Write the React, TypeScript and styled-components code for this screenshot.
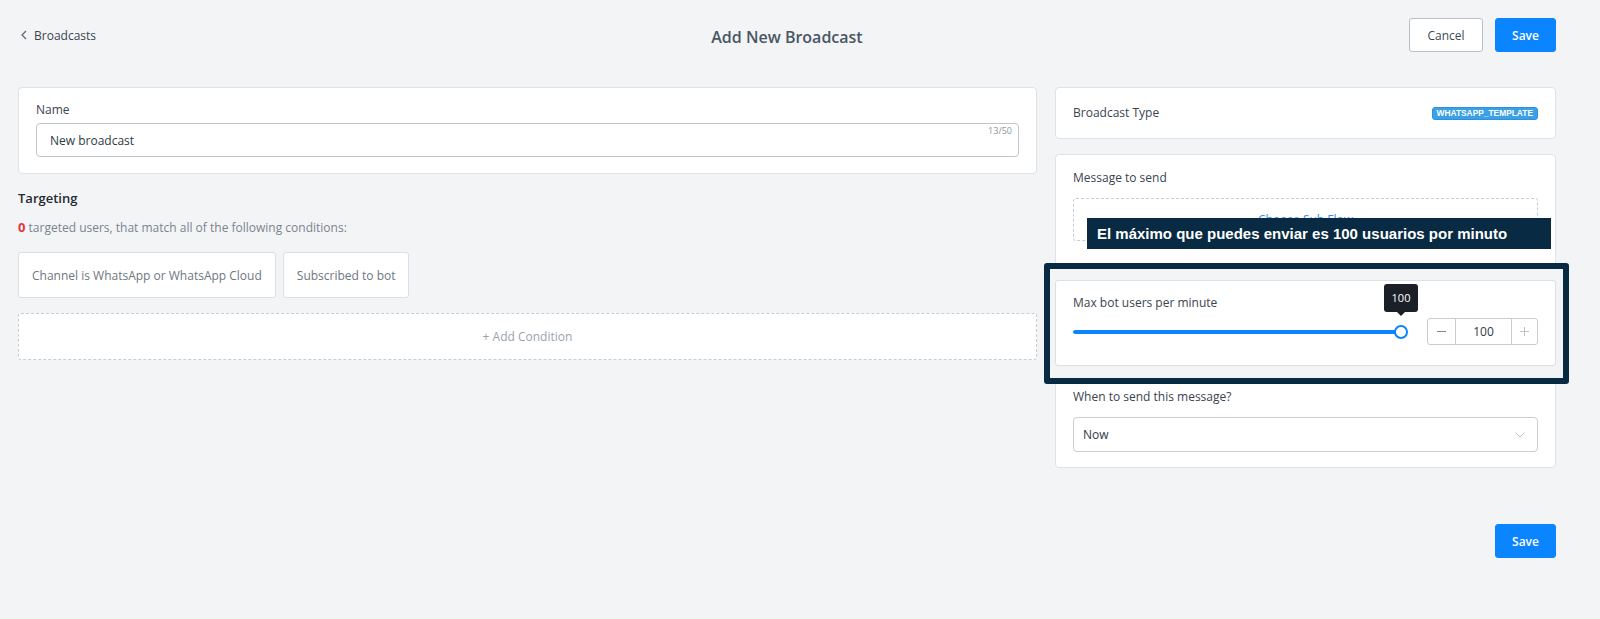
import React from "react";
import styled, { createGlobalStyle } from "styled-components";

const GlobalStyle = createGlobalStyle`
  html, body { margin: 0; padding: 0; background: #f3f4f6; }
  body {
    font-family: "Open Sans", "Noto Sans", Arial, sans-serif;
    color: #2f3a45;
    -webkit-font-smoothing: antialiased;
  }
  * { box-sizing: border-box; }
`;

const Page = styled.div`
  width: 1538px;
  margin-left: 18px;
  padding-top: 18px;
  min-height: 619px;
`;

const Header = styled.header`
  display: grid;
  grid-template-columns: 1fr auto 1fr;
  align-items: center;
  height: 34px;
`;

const BackLink = styled.a`
  display: flex;
  align-items: center;
  gap: 7px;
  padding-left: 3px;
  font-size: 12px;
  color: #3b4550;
  text-decoration: none;
  cursor: pointer;
`;

const Title = styled.h1`
  margin: 0;
  padding-top: 4px;
  font-size: 16px;
  font-weight: 600;
  color: #4a5663;
`;

const Actions = styled.div`
  justify-self: end;
  display: flex;
  gap: 12px;
`;

const Button = styled.button<{ $primary?: boolean; $w: number }>`
  height: 34px;
  width: ${(p) => p.$w}px;
  border-radius: 3px;
  font-family: inherit;
  font-size: 12px;
  font-weight: ${(p) => (p.$primary ? 600 : 400)};
  cursor: pointer;
  border: 1px solid ${(p) => (p.$primary ? "#0a84ff" : "#b9bfc6")};
  background: ${(p) => (p.$primary ? "#0a84ff" : "#ffffff")};
  color: ${(p) => (p.$primary ? "#ffffff" : "#3d4750")};
`;

const Main = styled.main`
  display: grid;
  grid-template-columns: 1019px 501px;
  gap: 18px;
  margin-top: 35px;
  align-items: start;
`;

const Column = styled.section`
  display: flex;
  flex-direction: column;
`;

const Card = styled.div`
  background: #ffffff;
  border: 1px solid #dfe2e6;
  border-radius: 4px;
`;

const NameCard = styled(Card)`
  padding: 13px 17px 16px;
`;

const Label = styled.div<{ $mb?: number; $mt?: number }>`
  font-size: 12px;
  line-height: 18px;
  color: #3a4450;
  margin-top: ${(p) => p.$mt ?? 0}px;
  margin-bottom: ${(p) => p.$mb ?? 0}px;
`;

const InputWrap = styled.div`
  position: relative;
`;

const TextInput = styled.input`
  display: block;
  width: 100%;
  height: 34px;
  border: 1px solid #c1c6cc;
  border-radius: 4px;
  padding: 0 13px;
  font-family: inherit;
  font-size: 12px;
  color: #2f3a45;
  background: #fff;
  outline: none;
`;

const Counter = styled.span`
  position: absolute;
  top: 2px;
  right: 7px;
  font-size: 9px;
  line-height: 12px;
  color: #8c949c;
`;

const SectionTitle = styled.h2`
  margin: 14px 0 0;
  font-size: 13px;
  line-height: 20px;
  font-weight: 600;
  color: #1f2a33;
`;

const Subtitle = styled.p`
  margin: 10px 0 0;
  font-size: 12px;
  line-height: 18px;
  color: #7a848e;
`;

const Count = styled.span`
  color: #e5343a;
  font-weight: 700;
  font-size: 13px;
`;

const Chips = styled.div`
  display: flex;
  gap: 7px;
  margin-top: 15px;
`;

const Chip = styled.div`
  height: 46px;
  display: flex;
  align-items: center;
  padding: 0 13px;
  background: #fff;
  border: 1px solid #dcdfe3;
  border-radius: 3px;
  font-size: 12px;
  color: #6d7781;
`;

const AddCondition = styled.button`
  margin-top: 15px;
  height: 47px;
  width: 100%;
  background: #fff;
  border: 1px dashed #c9cdd3;
  border-radius: 3px;
  font-family: inherit;
  font-size: 12px;
  color: #9aa3ac;
  cursor: pointer;
`;

const TypeCard = styled(Card)`
  height: 52px;
  display: flex;
  align-items: center;
  justify-content: space-between;
  padding: 0 17px;
`;

const Badge = styled.span`
  height: 13px;
  padding: 0 4px;
  display: inline-flex;
  align-items: center;
  background: #3aa0e8;
  border: 1px solid #2e90da;
  border-radius: 3px;
  color: #ffffff;
  font-family: "Liberation Sans", Arial, sans-serif;
  font-weight: 700;
  font-size: 8.4px;
`;

const MessageCard = styled(Card)`
  margin-top: 15px;
  padding: 14px 17px 15px;
`;

const DashedBox = styled.div`
  height: 43px;
  display: flex;
  align-items: center;
  justify-content: center;
  border: 1px dashed #c9cdd3;
  border-radius: 3px;
  font-size: 12px;
  color: #3b8ef0;
`;

const Spotlight = styled.div`
  position: relative;
  z-index: 1;
  margin: 39px -18px 0;
  &::before {
    content: "";
    position: absolute;
    top: -17px;
    bottom: -18px;
    left: -11px;
    right: -13px;
    border: 6px solid #082a42;
    border-radius: 3px;
    background: #f3f4f6;
    z-index: -1;
  }
`;

const TourBanner = styled.div`
  position: absolute;
  top: -62px;
  left: 32px;
  width: 464px;
  height: 31px;
  padding-left: 10px;
  background: #082a42;
  color: #ffffff;
  font-family: "Liberation Sans", Arial, sans-serif;
  font-weight: 700;
  font-size: 15px;
  line-height: 31px;
  white-space: nowrap;
  z-index: 2;
`;

const InnerCard = styled.div`
  background: #fff;
  border: 1px solid #dcdfe3;
  border-radius: 3px;
  padding: 13px 17px 20px;
`;

const SliderRow = styled.div`
  margin-top: 6px;
  height: 27px;
  display: flex;
  align-items: center;
`;

const Slider = styled.div`
  position: relative;
  width: 328px;
  height: 14px;
  margin-right: 26px;
  display: flex;
  align-items: center;
`;

const Track = styled.div`
  width: 100%;
  height: 4px;
  border-radius: 2px;
  background: #0a84ff;
`;

const Knob = styled.div`
  position: absolute;
  top: 0;
  right: -7px;
  width: 14px;
  height: 14px;
  border-radius: 50%;
  border: 2px solid #0a84ff;
  background: #fff;
`;

const ValueTip = styled.div`
  position: absolute;
  bottom: calc(100% + 13px);
  right: -17px;
  width: 34px;
  height: 28px;
  display: flex;
  align-items: center;
  justify-content: center;
  background: #1b2028;
  border-radius: 3px;
  color: #fff;
  font-size: 11px;
  &::after {
    content: "";
    position: absolute;
    top: 100%;
    left: 50%;
    margin-left: -4px;
    border: 4px solid transparent;
    border-top-color: #1b2028;
  }
`;

const Stepper = styled.div`
  display: flex;
  height: 27px;
  width: 111px;
  border: 1px solid #c9cdd2;
  border-radius: 3px;
  background: #fff;
`;

const StepBtn = styled.div<{ $w: number; $side: "left" | "right" }>`
  width: ${(p) => p.$w}px;
  display: flex;
  align-items: center;
  justify-content: center;
  ${(p) => (p.$side === "left" ? "border-right" : "border-left")}: 1px solid #c9cdd2;
`;

const StepValue = styled.div`
  flex: 1;
  display: flex;
  align-items: center;
  justify-content: center;
  font-size: 12px;
  color: #2f3a45;
`;

const Select = styled.div`
  height: 35px;
  display: flex;
  align-items: center;
  justify-content: space-between;
  padding: 0 12px 0 9px;
  border: 1px solid #c9cdd2;
  border-radius: 4px;
  font-size: 12px;
  color: #2f3a45;
`;

const Footer = styled.div`
  display: flex;
  justify-content: flex-end;
  margin-top: 56px;
`;

export default function App() {
  return (
    <>
      <GlobalStyle />
      <Page>
        <Header>
          <BackLink>
            <svg width="6" height="10" viewBox="0 0 6 10">
              <path d="M5 1 L1 5 L5 9" fill="none" stroke="#5b6570" strokeWidth="1.2" />
            </svg>
            Broadcasts
          </BackLink>
          <Title>Add New Broadcast</Title>
          <Actions>
            <Button $w={74}>Cancel</Button>
            <Button $primary $w={61}>Save</Button>
          </Actions>
        </Header>

        <Main>
          <Column>
            <NameCard>
              <Label $mb={4}>Name</Label>
              <InputWrap>
                <TextInput defaultValue="New broadcast" />
                <Counter>13/50</Counter>
              </InputWrap>
            </NameCard>
            <SectionTitle>Targeting</SectionTitle>
            <Subtitle>
              <Count>0</Count> targeted users, that match all of the following conditions:
            </Subtitle>
            <Chips>
              <Chip>Channel is WhatsApp or WhatsApp Cloud</Chip>
              <Chip>Subscribed to bot</Chip>
            </Chips>
            <AddCondition>+ Add Condition</AddCondition>
          </Column>

          <Column>
            <TypeCard>
              <Label>Broadcast Type</Label>
              <Badge>WHATSAPP_TEMPLATE</Badge>
            </TypeCard>

            <MessageCard>
              <Label $mb={11}>Message to send</Label>
              <DashedBox>Choose Sub Flow</DashedBox>

              <Spotlight>
                <TourBanner>El máximo que puedes enviar es 100 usuarios por minuto</TourBanner>
                <InnerCard>
                  <Label>Max bot users per minute</Label>
                  <SliderRow>
                    <Slider>
                      <Track />
                      <Knob />
                      <ValueTip>100</ValueTip>
                    </Slider>
                    <Stepper>
                      <StepBtn $w={28} $side="left">
                        <svg width="9" height="9" viewBox="0 0 9 9">
                          <path d="M0 4.5 H9" stroke="#7f8892" strokeWidth="1" />
                        </svg>
                      </StepBtn>
                      <StepValue>100</StepValue>
                      <StepBtn $w={26} $side="right">
                        <svg width="9" height="9" viewBox="0 0 9 9">
                          <path d="M0 4.5 H9 M4.5 0 V9" stroke="#bcc2c9" strokeWidth="1" />
                        </svg>
                      </StepBtn>
                    </Stepper>
                  </SliderRow>
                </InnerCard>
              </Spotlight>

              <Label $mt={22} $mb={11}>When to send this message?</Label>
              <Select>
                Now
                <svg width="10" height="6" viewBox="0 0 10 6">
                  <path d="M0.5 0.5 L5 5 L9.5 0.5" fill="none" stroke="#b8bfc6" strokeWidth="1" />
                </svg>
              </Select>
            </MessageCard>

            <Footer>
              <Button $primary $w={61}>Save</Button>
            </Footer>
          </Column>
        </Main>
      </Page>
    </>
  );
}
